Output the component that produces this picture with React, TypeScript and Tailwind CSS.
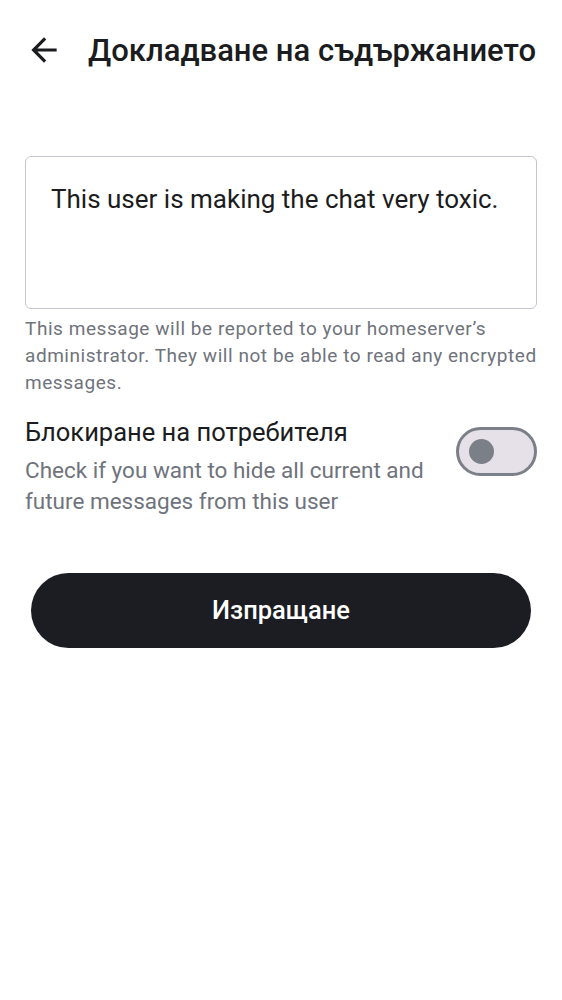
import React from "react";

export default function App() {
  return (
    <div className="w-[562px] h-[1000px] bg-white" style={{ fontFamily: "Roboto, 'Noto Sans', sans-serif" }}>
      <div className="flex items-center h-[100px] pl-[25px]">
        <svg width="38" height="38" viewBox="0 0 24 24" className="text-[#1b1c20] shrink-0">
          <path d="M20 11H7.83l5.59-5.59L12 4l-8 8 8 8 1.41-1.41L7.83 13H20v-2z" fill="currentColor" />
        </svg>
        <div className="ml-[25px] text-[31px] font-medium text-[#1b1c20] leading-none whitespace-nowrap">Докладване на съдържанието</div>
      </div>
      <div className="px-[25px] pt-[56px]">
        <div className="h-[153px] border border-[#c3c6cf] rounded-[6px] pl-[25px] pr-[10px] pt-[26px] text-[26px] text-[#1b1c20] leading-[32px] whitespace-nowrap">
          This user is making the chat very toxic.
        </div>
        <div className="mt-[6px] text-[19px] leading-[27px] tracking-[0.55px] text-[#6f737c]">
          This message will be reported to your homeserver’s administrator. They will not be able to read any encrypted messages.
        </div>
        <div className="flex items-start justify-between mt-[20px]">
          <div className="w-[410px]">
            <div className="text-[25.5px] leading-[32px] text-[#1b1c20] whitespace-nowrap">Блокиране на потребителя</div>
            <div className="mt-[7px] text-[22.5px] leading-[31px] text-[#6f737c]">
              Check if you want to hide all current and future messages from this user
            </div>
          </div>
          <div className="mt-[11px] w-[81px] h-[49px] rounded-full border-[3px] border-[#7b7f88] bg-[#e6e0e9] flex items-center pl-[10px] shrink-0">
            <div className="w-[25px] h-[25px] rounded-full bg-[#7b7f88]" />
          </div>
        </div>
        <div className="mt-[56px] mx-[6px] h-[75px] rounded-full bg-[#1c1d22] flex items-center justify-center text-white text-[25.5px] font-medium">
          Изпращане
        </div>
      </div>
    </div>
  );
}
